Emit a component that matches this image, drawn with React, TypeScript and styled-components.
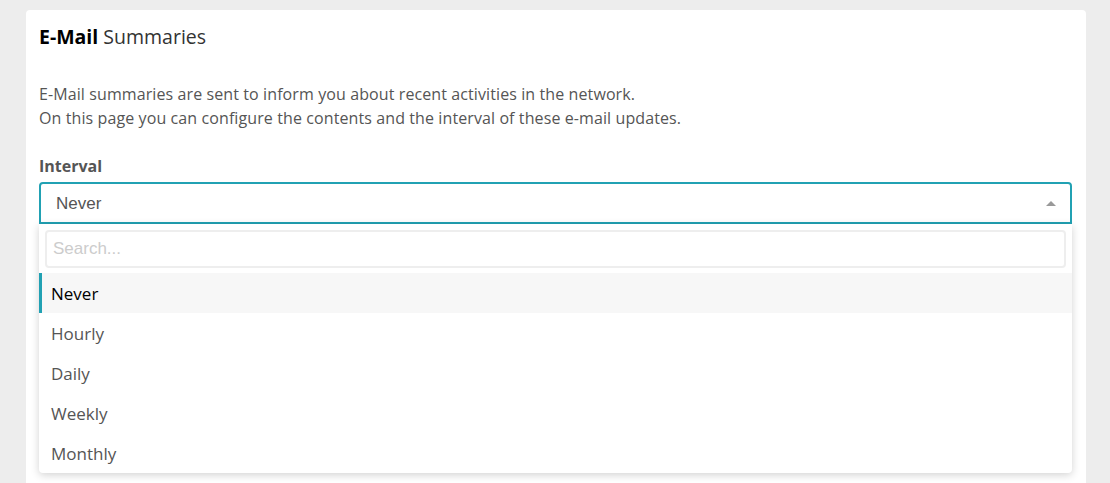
import * as React from 'react';
import styled, { createGlobalStyle } from 'styled-components';

const GlobalStyle = createGlobalStyle`
  html, body {
    margin: 0;
    padding: 0;
    background: #ededed;
    font-family: 'Open Sans', sans-serif;
  }
`;

const Page = styled.div`
  padding: 10px 24px 0 26px;
  height: 483px;
  box-sizing: border-box;
  overflow: hidden;
`;

const Panel = styled.section`
  background: #fff;
  border-radius: 4px;
  padding: 13px 14px 40px 13px;
  min-height: 520px;
  box-sizing: border-box;
`;

const Heading = styled.h1`
  margin: 0;
  font-size: 19.5px;
  font-weight: 400;
  line-height: 28px;
  color: #333;

  strong {
    font-weight: 700;
    color: #000;
  }
`;

const Description = styled.p`
  margin: 31px 0 0;
  font-size: 16px;
  letter-spacing: 0.1px;
  line-height: 24px;
  color: #555;
`;

const Label = styled.label`
  display: block;
  margin-top: 26px;
  font-size: 16px;
  font-weight: 700;
  line-height: 20px;
  color: #555;
`;

const SelectWrap = styled.div`
  position: relative;
  margin-top: 6px;
`;

const SelectBox = styled.div`
  display: flex;
  align-items: center;
  justify-content: space-between;
  height: 42px;
  box-sizing: border-box;
  border: 2px solid #21a1b3;
  border-radius: 4px 4px 0 0;
  padding: 2px 14px 0 15px;
  font-family: 'Liberation Sans', Arial, sans-serif;
  font-size: 17px;
  color: #555;
`;

const Caret = styled.span`
  width: 0;
  height: 0;
  border-left: 5px solid transparent;
  border-right: 5px solid transparent;
  border-bottom: 5px solid #999;
  margin-top: -2px;
`;

const Dropdown = styled.div`
  position: absolute;
  top: 42px;
  left: 0;
  right: 0;
  background: #fff;
  border-radius: 0 0 4px 4px;
  box-shadow: 0 2px 8px rgba(0, 0, 0, 0.18);
  padding-top: 6px;
`;

const SearchField = styled.input`
  display: block;
  box-sizing: border-box;
  width: calc(100% - 12px);
  height: 38px;
  margin: 0 6px 5px;
  border: 2px solid #eee;
  border-radius: 4px;
  padding: 0 6px;
  font-family: 'Liberation Sans', Arial, sans-serif;
  font-size: 17px;
  color: #555;
  outline: none;

  &::placeholder {
    color: #ccc;
  }
`;

const Option = styled.div<{ $active?: boolean }>`
  height: 40px;
  display: flex;
  align-items: center;
  padding-left: ${(p) => (p.$active ? '9px' : '12px')};
  border-left: ${(p) => (p.$active ? '3px solid #21a1b3' : 'none')};
  background: ${(p) => (p.$active ? '#f7f7f7' : 'transparent')};
  color: ${(p) => (p.$active ? '#000' : '#555')};
  font-size: 17px;
`;

const options = ['Never', 'Hourly', 'Daily', 'Weekly', 'Monthly'];

export default function App() {
  return (
    <>
      <GlobalStyle />
      <Page>
        <Panel>
          <Heading>
            <strong>E-Mail</strong> Summaries
          </Heading>
          <Description>
            E-Mail summaries are sent to inform you about recent activities in the network.
            <br />
            On this page you can configure the contents and the interval of these e-mail updates.
          </Description>
          <Label>Interval</Label>
          <SelectWrap>
            <SelectBox>
              <span>Never</span>
              <Caret />
            </SelectBox>
            <Dropdown>
              <SearchField placeholder="Search..." />
              {options.map((o, i) => (
                <Option key={o} $active={i === 0}>
                  {o}
                </Option>
              ))}
            </Dropdown>
          </SelectWrap>
        </Panel>
      </Page>
    </>
  );
}
